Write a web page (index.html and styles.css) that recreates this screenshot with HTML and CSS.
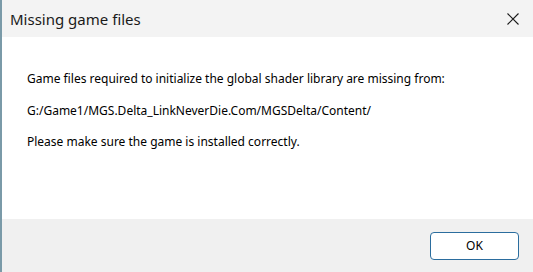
FILE: index.html
```html
<!DOCTYPE html>
<html>
<head>
<meta charset="utf-8">
<link rel="stylesheet" href="styles.css">
</head>
<body>
<div class="window">
  <div class="titlebar">
    <span class="title">Missing game files</span>
    <span class="close">
      <svg width="12" height="12" viewBox="0 0 12 12"><path d="M0.5 0.5 L11.5 11.5 M11.5 0.5 L0.5 11.5" stroke="#1a1a1a" stroke-width="1.1" fill="none"/></svg>
    </span>
  </div>
  <div class="content">
    <p>Game files required to initialize the global shader library are missing from:</p>
    <p>G:/Game1/MGS.Delta_LinkNeverDie.Com/MGSDelta/Content/</p>
    <p>Please make sure the game is installed correctly.</p>
  </div>
  <div class="footer">
    <button class="ok">OK</button>
  </div>
</div>
</body>
</html>
```
FILE: styles.css
```css
html, body {
  margin: 0;
  padding: 0;
  width: 533px;
  height: 272px;
  overflow: hidden;
}
.window {
  width: 533px;
  height: 272px;
  display: flex;
  flex-direction: column;
  border-left: 2px solid #7a9aa8;
  box-sizing: border-box;
  font-family: "Noto Sans", "Open Sans", sans-serif;
  color: #000;
}
.titlebar {
  height: 37px;
  background: #f3f3f3;
  display: flex;
  align-items: center;
  justify-content: space-between;
  padding: 0 14px 0 8px;
  flex-shrink: 0;
}
.title {
  font-size: 15px;
  color: #1a1a1a;
}
.close {
  display: flex;
  width: 12px;
  height: 12px;
}
.content {
  flex: 1;
  background: #fff;
  padding: 33px 25px 0;
}
.content p {
  margin: 0 0 13.5px;
  font-size: 12px;
  line-height: 18px;
}
.footer {
  height: 53px;
  background: #f0f0f0;
  display: flex;
  align-items: center;
  justify-content: flex-end;
  padding: 0 14px 0 0;
  flex-shrink: 0;
}
.ok {
  width: 89px;
  height: 28px;
  background: #fff;
  border: 1px solid #2b6d9e;
  border-radius: 4px;
  font-family: "Noto Sans", sans-serif;
  font-size: 12px;
  color: #000;
  padding: 0;
}
```
